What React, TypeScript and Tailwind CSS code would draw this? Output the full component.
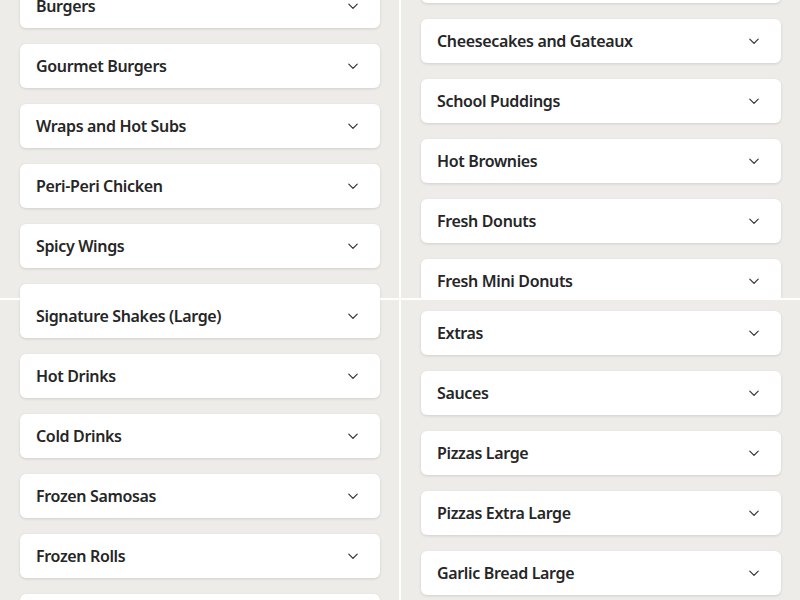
import React from 'react';

// Four scrolled views of the same menu accordion list
const panels: { offset: string; items: string[] }[] = [
    {
        offset: 'mt-[-16px]',
        items: ['Burgers', 'Gourmet Burgers', 'Wraps and Hot Subs', 'Peri-Peri Chicken', 'Spicy Wings', ''],
    },
    {
        offset: 'mt-[-41px]',
        items: ['', 'Cheesecakes and Gateaux', 'School Puddings', 'Hot Brownies', 'Fresh Donuts', 'Fresh Mini Donuts'],
    },
    {
        offset: 'mt-[-6px]',
        items: ['Signature Shakes (Large)', 'Hot Drinks', 'Cold Drinks', 'Frozen Samosas', 'Frozen Rolls', ''],
    },
    {
        offset: 'mt-[11px]',
        items: ['Extras', 'Sauces', 'Pizzas Large', 'Pizzas Extra Large', 'Garlic Bread Large'],
    },
];

const Chevron = () => (
    <svg width="16" height="16" viewBox="0 0 16 16" fill="none" className="flex-shrink-0">
        <path d="M3.8 6.2l4.2 4.2 4.2-4.2" stroke="#333" strokeWidth="1.2" strokeLinecap="round" strokeLinejoin="round" />
    </svg>
);

const AccordionRow: React.FC<{ label: string }> = ({ label }) => (
    <div className="ml-[20px] w-[360px] h-[44px] flex-shrink-0 bg-white rounded-md shadow-[0_1px_3px_rgba(0,0,0,0.12)] flex items-center justify-between pl-4 pr-[19px]">
        <span className="text-[16px] font-semibold tracking-[-0.35px] text-[#262626] leading-none">{label}</span>
        <Chevron />
    </div>
);

export default function App() {
    return (
        <div
            className="w-[800px] h-[600px] bg-white grid grid-cols-[399px_399px] grid-rows-[298px_300px] gap-[2px] overflow-hidden"
            style={{ fontFamily: '"Noto Sans", "Open Sans", sans-serif' }}
        >
            {panels.map((p, i) => (
                <div key={i} className="bg-[#edece8] overflow-hidden">
                    <div className={`flex flex-col gap-4 ${p.offset}`}>
                        {p.items.map((label, j) => (
                            <AccordionRow key={j} label={label} />
                        ))}
                    </div>
                </div>
            ))}
        </div>
    );
}
